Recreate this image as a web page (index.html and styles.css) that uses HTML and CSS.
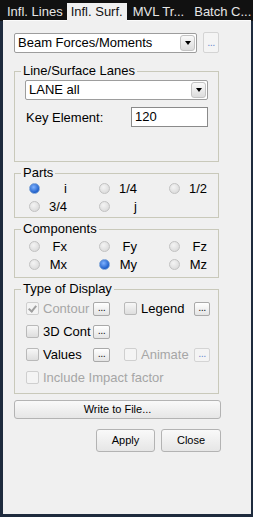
FILE: index.html
```html
<!DOCTYPE html>
<html lang="en">
  <head>
    <meta charset="UTF-8" />
    <title>Influence Surface</title>
    <link rel="stylesheet" href="styles.css">
  </head>
  <body>
    <div class="tabs">
      <span class="tab first">Infl. Lines</span>
      <span class="tab active">Infl. Surf.</span>
      <span class="tab">MVL Tr...</span>
      <span class="tab">Batch C...</span>
    </div>

    <div class="panel">
      <div class="top-row">
        <div class="combo wide">
          <span class="combo-text">Beam Forces/Moments</span>
          <span class="combo-btn"><i class="arrow"></i></span>
        </div>
        <span class="dots-btn off">...</span>
      </div>

      <fieldset class="group lanes">
        <legend>Line/Surface Lanes</legend>
        <div class="combo">
          <span class="combo-text">LANE all</span>
          <span class="combo-btn"><i class="arrow"></i></span>
        </div>
        <div class="key-row">
          <label>Key Element:</label>
          <span class="field">120</span>
        </div>
      </fieldset>

      <fieldset class="group">
        <legend>Parts</legend>
        <div class="radios parts">
          <div class="opt"><span class="radio on"></span><span class="lbl">i</span></div>
          <div class="opt"><span class="radio"></span><span class="lbl">1/4</span></div>
          <div class="opt"><span class="radio"></span><span class="lbl">1/2</span></div>
          <div class="opt"><span class="radio"></span><span class="lbl">3/4</span></div>
          <div class="opt"><span class="radio"></span><span class="lbl">j</span></div>
        </div>
      </fieldset>

      <fieldset class="group">
        <legend>Components</legend>
        <div class="radios comps">
          <div class="opt"><span class="radio"></span><span class="lbl">Fx</span></div>
          <div class="opt"><span class="radio"></span><span class="lbl">Fy</span></div>
          <div class="opt"><span class="radio"></span><span class="lbl">Fz</span></div>
          <div class="opt"><span class="radio"></span><span class="lbl">Mx</span></div>
          <div class="opt"><span class="radio on"></span><span class="lbl">My</span></div>
          <div class="opt"><span class="radio"></span><span class="lbl">Mz</span></div>
        </div>
      </fieldset>

      <fieldset class="group">
        <legend>Type of Display</legend>
        <div class="display">
          <div class="check disabled"><span class="box checked"></span>Contour</div>
          <span class="dots-btn">...</span>
          <div class="check"><span class="box"></span>Legend</div>
          <span class="dots-btn narrow">...</span>

          <div class="check"><span class="box"></span>3D Cont</div>
          <span class="dots-btn">...</span>
          <span></span>
          <span></span>

          <div class="check"><span class="box"></span>Values</div>
          <span class="dots-btn">...</span>
          <div class="check disabled"><span class="box"></span>Animate</div>
          <span class="dots-btn narrow off">...</span>

          <div class="check disabled span-all"><span class="box"></span>Include Impact factor</div>
        </div>
      </fieldset>

      <div class="btn write">Write to File...</div>

      <div class="actions">
        <div class="btn">Apply</div>
        <div class="btn">Close</div>
      </div>
    </div>
  </body>
</html>
```

FILE: styles.css
```css
body {
  margin: 0;
  background: #1e2b3d;
  font-family: "Liberation Sans", Arial, sans-serif;
  font-size: 13px;
  color: #000;
}
.tabs {
  height: 21px;
  background: #111;
  display: flex;
  align-items: flex-end;
  color: #e6e6e6;
  line-height: 17px;
  overflow: hidden;
  white-space: nowrap;
}
.tab {
  flex-shrink: 0;
  padding: 0 4px;
  height: 18px;
  margin-right: 2px;
}
.tab.first {
  margin-left: 3px;
  margin-right: 0;
}
.tab.active {
  background: #f0f0f0;
  color: #111;
  margin-right: 2px;
}
.panel {
  margin: -1px 2px 0 3px;
  height: 482px;
  background: #f0f0f0;
  padding: 11px 0 0 11px;
  border-top: 1px solid #fbfbfb;
}
.top-row {
  display: flex;
  align-items: center;
  gap: 6px;
  width: 205px;
}
.combo {
  height: 20px;
  box-sizing: border-box;
  border: 1px solid #9d9d9d;
  border-radius: 2px;
  background: #fff;
  display: flex;
  align-items: center;
  padding: 0 1px 0 3px;
}
.combo.wide {
  width: 183px;
}
.combo-text {
  flex: 1;
  line-height: 16px;
}
.combo-btn {
  width: 15px;
  height: 16px;
  box-sizing: border-box;
  border: 1px solid #c3c3c3;
  border-radius: 3px;
  background: linear-gradient(#fafafa, #dcdcdc);
  display: flex;
  align-items: center;
  justify-content: center;
}
.arrow {
  width: 0;
  height: 0;
  border-left: 3px solid transparent;
  border-right: 3px solid transparent;
  border-top: 4px solid #000;
}
.dots-btn {
  width: 17px;
  height: 14px;
  box-sizing: border-box;
  border: 1px solid #a9a9a9;
  border-radius: 2px;
  background: linear-gradient(#fff, #e4e4e4);
  font-size: 11px;
  line-height: 9px;
  text-align: center;
  letter-spacing: -0.5px;
  color: #222;
}
.dots-btn.narrow {
  width: 16px;
}
.dots-btn.off {
  color: #6f8ed0;
  border-color: #d4d4d4;
  background: #f4f4f4;
}
.top-row .dots-btn {
  width: 16px;
  height: 21px;
  line-height: 18px;
}

.group {
  width: 205px;
  box-sizing: border-box;
  margin: 3px 0 0;
  padding: 0 10px 2px;
  border: 1px solid #c9c9ba;
  min-width: 0;
}
.group legend {
  padding: 0 2px;
  margin-left: -4px;
  line-height: 16px;
}
.lanes {
  margin-top: 10px;
  padding-top: 1px;
  padding-bottom: 34px;
}
.key-row {
  display: flex;
  align-items: center;
  margin-top: 7px;
  padding-left: 1px;
}
.key-row label {
  width: 105px;
}
.field {
  width: 77px;
  height: 20px;
  box-sizing: border-box;
  border: 1px solid #8a8a8a;
  background: #fff;
  padding-left: 3px;
  line-height: 18px;
}

.radios {
  display: grid;
  grid-template-columns: repeat(3, 70px);
  grid-auto-rows: 18px;
  margin-left: 4px;
}
.parts {
  margin-top: -2px;
}
.comps {
  padding-bottom: 2px;
}
.opt {
  display: flex;
  align-items: center;
}
.radio {
  width: 11px;
  height: 11px;
  box-sizing: border-box;
  border-radius: 50%;
  border: 1px solid #c2c2c2;
  background: radial-gradient(circle at 40% 35%, #f4f4f4, #d4d4d4);
}
.radio.on {
  border-color: #7aa1d6;
  background: radial-gradient(circle at 40% 35%, #7fb2ff, #1f5fc9 70%);
}
.lbl {
  width: 27px;
  text-align: right;
}

.display {
  display: grid;
  grid-template-columns: 67px 31px 70px 16px;
  grid-auto-rows: 23px;
  align-items: center;
  margin-left: 1px;
  padding-bottom: 2px;
}
.check {
  display: flex;
  align-items: center;
  white-space: nowrap;
}
.check.disabled {
  color: #a6a6a6;
}
.span-all {
  grid-column: 1 / -1;
}
.box {
  width: 13px;
  height: 13px;
  box-sizing: border-box;
  border: 1px solid #b9b9b9;
  border-radius: 2px;
  background: linear-gradient(#f7f7f7, #dedede);
  margin-right: 4px;
  position: relative;
}
.check.disabled .box {
  border-color: #cfcfcf;
  background: #f4f4f4;
}
.box.checked::after {
  content: "";
  position: absolute;
  left: 3px;
  top: 1px;
  width: 3px;
  height: 6px;
  border-right: 2px solid #a0a0a0;
  border-bottom: 2px solid #a0a0a0;
  transform: rotate(40deg);
}

.btn {
  box-sizing: border-box;
  border: 1px solid #b3b3b3;
  border-radius: 3px;
  background: linear-gradient(#f9f9f9, #e6e6e6);
  font-size: 11px;
  text-align: center;
  color: #000;
}
.write {
  width: 207px;
  height: 19px;
  line-height: 17px;
  margin-top: 6px;
}
.actions {
  display: flex;
  justify-content: flex-end;
  gap: 6px;
  width: 207px;
  margin-top: 10px;
}
.actions .btn {
  width: 59px;
  height: 23px;
  line-height: 21px;
}
.actions .btn + .btn {
  width: 60px;
}
```
